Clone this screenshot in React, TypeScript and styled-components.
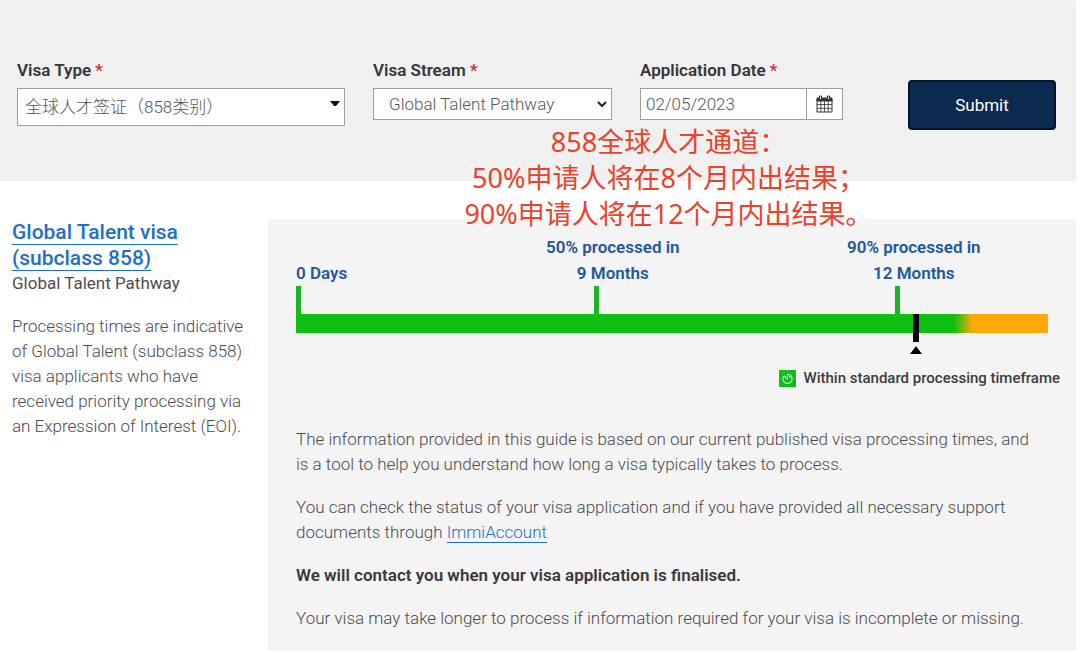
import React from "react";
import styled, { createGlobalStyle } from "styled-components";

const GlobalStyle = createGlobalStyle`
  * { box-sizing: border-box; }
  body {
    margin: 0;
    background: #ffffff;
    color: #4c4c50;
    font-family: Roboto, "Noto Sans CJK SC", sans-serif;
    font-size: 17px;
    font-weight: 300;
    line-height: 25px;
  }
  p, h2 { margin: 0; }
`;

const Page = styled.div`
  position: relative;
  padding-right: 4px;
`;

const SearchForm = styled.form`
  display: grid;
  grid-template-columns: 328fr 239fr 203fr 185fr;
  column-gap: 28px;
  align-items: start;
  min-height: 181px;
  padding: 56px 20px 50px 17px;
  background: #f0f0f0;
  border-top: 2px solid #f4f4f4;
`;

const Field = styled.div`
  display: flex;
  flex-direction: column;
  gap: 5px;
  min-width: 0;
`;

const FieldLabel = styled.label`
  color: #36363a;
  font-weight: 600;
`;

const Required = styled.span`
  color: #d8283c;
`;

const Control = styled.div<{ $height: number }>`
  position: relative;
  display: flex;
  height: ${(p) => p.$height}px;
  background: #ffffff;
  border: 1px solid #a0a0a0;
`;

const controlText = `
  flex: 1;
  min-width: 0;
  width: 100%;
  border: 0;
  background: transparent;
  color: #56565a;
  font-family: inherit;
  font-size: 17px;
  font-weight: 300;
  appearance: none;
  outline: none;
`;

const Select = styled.select<{ $indent: number }>`
  ${controlText}
  padding: 0 28px 0 ${(p) => p.$indent}px;
`;

const DateInput = styled.input`
  ${controlText}
  padding: 0 5px;
`;

const CaretIcon = styled.svg`
  position: absolute;
  top: 12px;
  right: 4px;
  pointer-events: none;
`;

const CalendarButton = styled.button`
  display: flex;
  align-items: center;
  justify-content: center;
  width: 36px;
  padding: 0;
  border: 0;
  border-left: 1px solid #a0a0a0;
  background: #ffffff;
`;

const SubmitButton = styled.button`
  justify-self: end;
  width: 148px;
  height: 50px;
  margin-top: 22px;
  border: 2px solid #05132b;
  border-radius: 4px;
  background: #0c2950;
  color: #ffffff;
  font-family: inherit;
  font-size: 17px;
  font-weight: 400;
`;

const Note = styled.p`
  position: absolute;
  top: 124px;
  left: 43%;
  width: max-content;
  color: #e8432c;
  font-family: "Noto Sans", "Noto Sans CJK SC", sans-serif;
  font-size: 27px;
  font-weight: 400;
  line-height: 36px;
  text-align: center;
`;

const Results = styled.main`
  display: grid;
  grid-template-columns: 268fr 808fr;
  padding-top: 38px;
`;

const Summary = styled.section`
  padding: 0 14px 0 12px;
`;

const VisaHeading = styled.h2`
  font-size: 21px;
  font-weight: 500;
  line-height: 26px;
`;

const VisaLink = styled.a`
  color: #1f6fc6;
  text-decoration: none;
  border-bottom: 1px solid #1f6fc6;
`;

const StreamName = styled.p`
  margin-bottom: 18px;
  font-weight: 400;
`;

const Panel = styled.section`
  padding: 15px 28px 20px;
  background: #f4f4f4;
`;

const Stops = styled.div`
  display: grid;
  grid-template-columns: 298fr 301fr 153fr;
`;

const Stop = styled.div<{ $shift: number }>`
  display: flex;
  flex-direction: column;
  justify-content: flex-end;

  p {
    width: max-content;
    margin-left: -${(p) => p.$shift}px;
    color: #20589c;
    font-weight: 600;
    line-height: 26px;
    text-align: center;
  }

  &::after {
    content: "";
    width: 5px;
    height: 28px;
    background: #1eb429;
  }
`;

const Bar = styled.div`
  position: relative;
  height: 19px;
  background: linear-gradient(to right, #0fc012 87.5%, #ffa908 90%);
`;

const Marker = styled.svg`
  position: absolute;
  top: 0;
  left: 81.7%;
`;

const Legend = styled.div`
  display: flex;
  justify-content: flex-end;
  align-items: center;
  gap: 8px;
  margin: 33px -12px 36px 0;
  color: #3c3c40;
  font-size: 15px;
  font-weight: 500;
`;

const Guide = styled.div`
  display: flex;
  flex-direction: column;
  gap: 18px;
  padding-right: 6px;
`;

const Strong = styled.p`
  color: #38383c;
  font-weight: 600;
`;

const stops = [
  { lines: ["0 Days"], shift: 0 },
  { lines: ["50% processed in", "9 Months"], shift: 48 },
  { lines: ["90% processed in", "12 Months"], shift: 48 },
];

export default function App() {
  return (
    <>
      <GlobalStyle />
      <Page>
        <SearchForm onSubmit={(e) => e.preventDefault()}>
          <Field>
            <FieldLabel htmlFor="type">
              Visa Type <Required>*</Required>
            </FieldLabel>
            <Control $height={38}>
              <Select id="type" $indent={7}>
                <option>全球人才签证（858类别）</option>
              </Select>
              <CaretIcon width="10" height="6" viewBox="0 0 10 6">
                <path d="M0 0h10L6 5H4z" fill="#111" />
              </CaretIcon>
            </Control>
          </Field>
          <Field>
            <FieldLabel htmlFor="stream">
              Visa Stream <Required>*</Required>
            </FieldLabel>
            <Control $height={32}>
              <Select id="stream" $indent={15}>
                <option>Global Talent Pathway</option>
              </Select>
              <CaretIcon width="10" height="7" viewBox="0 0 10 7">
                <path d="M1 1l4 4 4-4" fill="none" stroke="#1c2030" strokeWidth="2" />
              </CaretIcon>
            </Control>
          </Field>
          <Field>
            <FieldLabel htmlFor="date">
              Application Date <Required>*</Required>
            </FieldLabel>
            <Control $height={32}>
              <DateInput id="date" type="text" defaultValue="02/05/2023" />
              <CalendarButton type="button" aria-label="Choose date">
                <svg width="17" height="18" viewBox="0 0 17 18" fill="none" stroke="#333">
                  <path d="M1 4.5h15v12.5H1z" />
                  <path d="M1 3h15v3H1z" fill="#333" />
                  <path d="M4.800 6v11M8.500 6v11M12.200 6v11M1 9.500h15M1 13.300h15" strokeWidth=".8" />
                  <path d="M3.500 1h2v3.500h-2zM11.500 1h2v3.500h-2z" fill="#fff" />
                </svg>
              </CalendarButton>
            </Control>
          </Field>
          <SubmitButton type="submit">Submit</SubmitButton>
        </SearchForm>

        <Results>
          <Summary>
            <VisaHeading>
              <VisaLink href="#visa">
                Global Talent visa
                <br />
                (subclass 858)
              </VisaLink>
            </VisaHeading>
            <StreamName>Global Talent Pathway</StreamName>
            <p>
              Processing times are indicative of Global Talent (subclass 858) visa applicants who
              have received priority processing via an Expression of Interest (EOI).
            </p>
          </Summary>

          <Panel>
            <Stops>
              {stops.map((stop) => (
                <Stop key={stop.lines[0]} $shift={stop.shift}>
                  <p>
                    {stop.lines.map((line, i) => (
                      <React.Fragment key={line}>
                        {i > 0 && <br />}
                        {line}
                      </React.Fragment>
                    ))}
                  </p>
                </Stop>
              ))}
            </Stops>
            <Bar>
              <Marker width="12" height="40" viewBox="0 0 12 40">
                <path d="M3 0h6v28H3zM6 32l6 8H0z" fill="#050505" />
              </Marker>
            </Bar>
            <Legend>
              <svg width="17" height="17" viewBox="0 0 17 17" fill="none">
                <path d="M0 0h17v17H0z" fill="#10bd1b" />
                <path
                  d="M8.500 4.200a4.600 4.600 0 1 1-4 2.300M8.500 4.200v2.300M5.300 6l3.200 3M11 6.500l-.8.8"
                  stroke="#c9f5cb"
                  strokeWidth="1.100"
                  strokeLinecap="round"
                />
              </svg>
              Within standard processing timeframe
            </Legend>
            <Guide>
              <p>
                The information provided in this guide is based on our current published visa
                processing times, and is a tool to help you understand how long a visa typically
                takes to process.
              </p>
              <p>
                You can check the status of your visa application and if you have provided all
                necessary support documents through <VisaLink href="#account">ImmiAccount</VisaLink>
              </p>
              <Strong>We will contact you when your visa application is finalised.</Strong>
              <p>
                Your visa may take longer to process if information required for your visa is
                incomplete or missing.
              </p>
            </Guide>
          </Panel>
        </Results>

        <Note>
          858全球人才通道：
          <br />
          50%申请人将在8个月内出结果；
          <br />
          90%申请人将在12个月内出结果。
        </Note>
      </Page>
    </>
  );
}
